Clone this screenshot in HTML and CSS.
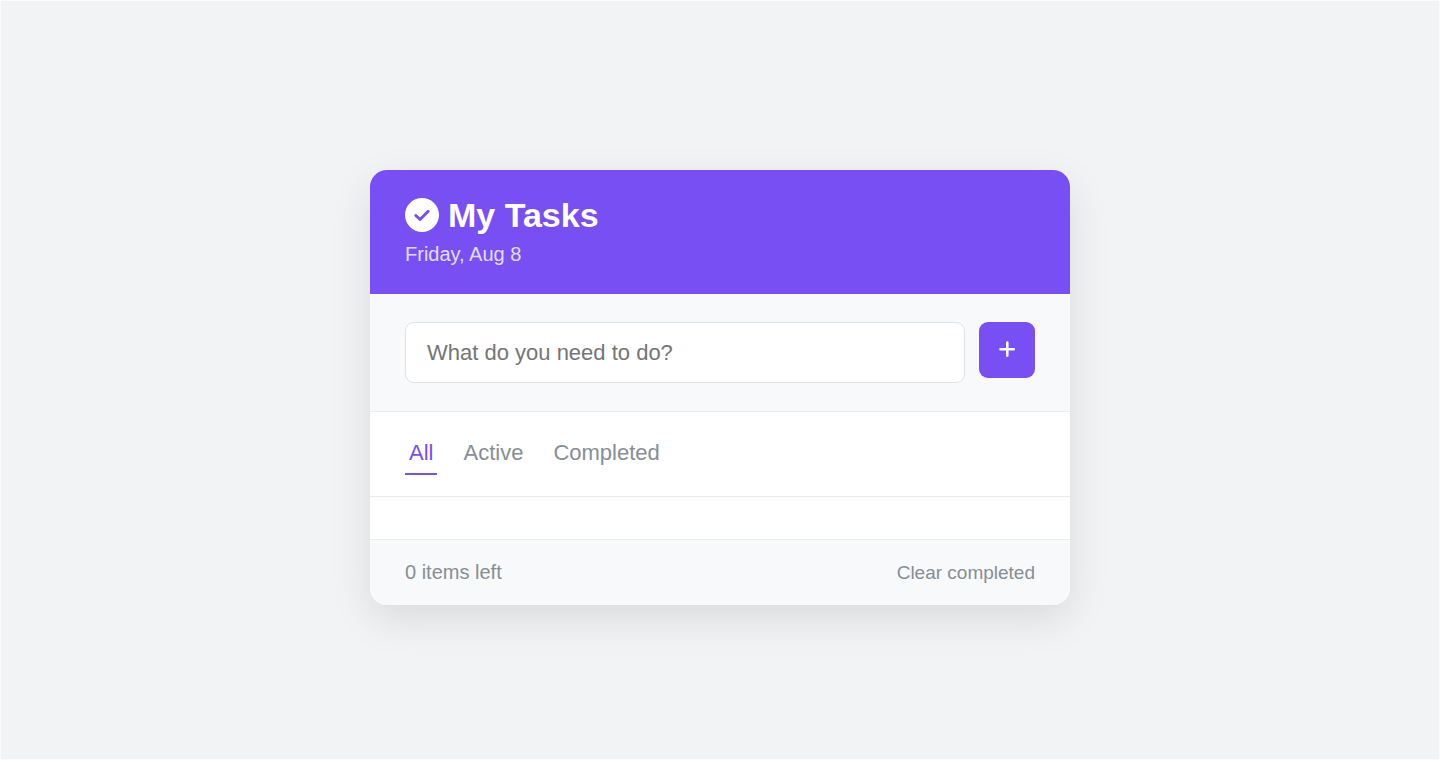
FILE: index.html
```html
<!DOCTYPE html>
<html lang="en">
<head>
<meta charset="utf-8">
<meta name="viewport" content="width=device-width, initial-scale=1">
<title>My Tasks</title>
<link rel="stylesheet" href="styles.css">
</head>
<body class="page">
<main class="card">
  <header class="header">
    <h1 class="title">
      <svg class="title-icon" viewBox="0 0 34 34" aria-hidden="true">
        <circle cx="17" cy="17" r="17" fill="#fff"/>
        <path d="M10.800 17.500l4.200 4 8.200-8.200" fill="none" stroke="#774ff3" stroke-width="3" stroke-linecap="round" stroke-linejoin="round"/>
      </svg>
      <span>My Tasks</span>
    </h1>
    <p class="date">Friday, Aug 8</p>
  </header>
  <form class="add">
    <input class="add-input" type="text" placeholder="What do you need to do?" aria-label="New task">
    <button class="add-button" type="button" aria-label="Add task">
      <svg class="add-icon" viewBox="0 0 16 16" aria-hidden="true">
        <path d="M8.300 1.500v13.200M1.500 8.200h13.300" fill="none" stroke="#fff" stroke-width="2.500" stroke-linecap="round"/>
      </svg>
    </button>
  </form>
  <nav class="filters" aria-label="Filter tasks">
    <button class="filter filter-active" type="button">All</button>
    <button class="filter" type="button">Active</button>
    <button class="filter" type="button">Completed</button>
  </nav>
  <ul class="tasks"></ul>
  <footer class="footer">
    <span class="count">0 items left</span>
    <button class="clear" type="button">Clear completed</button>
  </footer>
</main>
</body>
</html>
```
FILE: styles.css
```css
* {
  box-sizing: border-box;
  margin: 0;
  padding: 0;
}

.page {
  display: flex;
  flex-direction: column;
  align-items: center;
  justify-content: center;
  min-height: 100vh;
  padding: 28px 28px 14px;
  border: 1px solid #fafbfb;
  background: #f1f3f5;
  font-family: "Liberation Sans", Arial, sans-serif;
}

button,
input {
  border: 0;
  background: none;
  font-family: inherit;
}

button {
  cursor: pointer;
}

.card {
  width: 100%;
  max-width: 700px;
  overflow: hidden;
  border-radius: 17px;
  background: #fff;
  box-shadow: 0 14px 42px rgba(0, 0, 0, 0.1);
}

.header {
  padding: 28px 35px;
  background: #774ff3;
  color: #fff;
}

.title {
  display: flex;
  align-items: center;
  gap: 9px;
  margin-bottom: 10px;
  font-size: 34px;
  line-height: 35px;
}

.title-icon {
  width: 34px;
  height: 34px;
}

.date {
  font-size: 20px;
  line-height: 23px;
  opacity: 0.8;
}

.add {
  display: flex;
  align-items: flex-start;
  gap: 14px;
  padding: 28px 35px;
  border-bottom: 1px solid #e9ecef;
  background: #f8f9fb;
}

.add-input {
  flex: 1;
  min-width: 0;
  padding: 17px 21px;
  border: 1px solid #dee2e6;
  border-radius: 9px;
  background: #fff;
  font-size: 22px;
  line-height: 25px;
}

.add-input::placeholder {
  color: #757575;
}

.add-button {
  display: flex;
  justify-content: center;
  width: 56px;
  height: 56px;
  padding-top: 19px;
  border-radius: 9px;
  background: #774ff3;
}

.add-icon {
  width: 16px;
  height: 16px;
}

.filters {
  display: flex;
  gap: 22px;
  padding: 21px 35px;
  border-bottom: 1px solid #e9ecef;
}

.filter {
  padding: 8px 4px;
  border-bottom: 2px solid transparent;
  color: #868e96;
  font-size: 22px;
  line-height: 24px;
}

.filter-active {
  border-bottom-color: #774ff3;
  color: #774ff3;
}

.tasks {
  padding: 21px 35px;
  list-style: none;
}

.footer {
  display: flex;
  align-items: center;
  justify-content: space-between;
  padding: 21px 35px;
  border-top: 1px solid #e9ecef;
  background: #f8f9fb;
  color: #868e96;
}

.count {
  font-size: 20px;
  line-height: 23px;
}

.clear {
  color: #868e96;
  font-size: 19px;
  line-height: 23px;
}
```
